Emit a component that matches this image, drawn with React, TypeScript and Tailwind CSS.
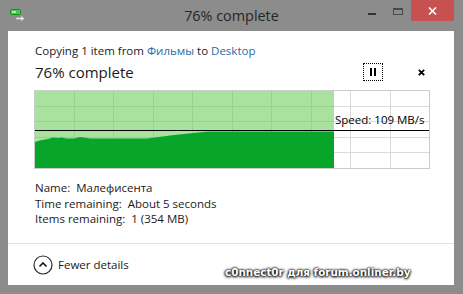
import React from "react";

const FONT = "font-['Open_Sans','Noto_Sans',sans-serif]";

// Throughput chart: progress area, grid, transfer-rate curve and current-speed line
function SpeedChart() {
  const W = 396;
  const H = 79;
  const done = 300;
  const cols = [1, 2, 3, 4, 5, 6, 7, 8, 9].map((k) => Math.round(k * 39.5) + 0.5);
  const rows = [1, 2, 3, 4].map((k) => Math.round(k * 15.6) + 0.5);
  const curve =
    "M1,52 L4,51 L8,50 L14,49 L19,47.5 L24,48 L28,47.5 L32,48.5 L40,48.5 L46,47 L50,47.5 L56,48.5 L113,48.5 L140,45 L174,41.5 L" +
    done +
    ",41.5 L" +
    done +
    ",78 L1,78 Z";
  return (
    <div className="relative w-[396px] h-[79px] -ml-px">
      <svg width={W} height={H} className="block" shapeRendering="crispEdges">
        <rect x="0" y="0" width={W} height={H} fill="#ffffff" />
        <rect x="1" y="1" width={done - 1} height={H - 2} fill="#a9e29f" />
        {cols.map((x) => (
          <line key={"v" + x} x1={x} y1={1} x2={x} y2={H - 1} stroke={x < done ? "#97d38c" : "#dadada"} strokeWidth={1} />
        ))}
        {rows.map((y) => (
          <g key={"h" + y}>
            <line x1={1} y1={y} x2={done} y2={y} stroke="#97d38c" strokeWidth={1} />
            <line x1={done} y1={y} x2={W - 1} y2={y} stroke="#dadada" strokeWidth={1} />
          </g>
        ))}
        <path d={curve} fill="#08a52b" shapeRendering="geometricPrecision" />
        <line x1={1} y1={40.5} x2={W - 1} y2={40.5} stroke="#000000" strokeWidth={1} />
        <rect x="0.5" y="0.5" width={W - 1} height={H - 1} fill="none" stroke="#c9cfc8" strokeWidth={1} />
      </svg>
      <div className={`absolute left-[301px] top-[22px] text-[11.5px] leading-[16px] text-black whitespace-nowrap ${FONT}`}>
        Speed: 109 MB/s
      </div>
    </div>
  );
}

function TitleIcon() {
  return (
    <svg width="18" height="14" viewBox="0 0 18 14">
      <rect x="1.5" y="1.5" width="10" height="5" rx="1" fill="#3ccf47" stroke="#1f8a2a" strokeWidth="1" />
      <rect x="3" y="3" width="4" height="2" fill="#9ef29f" />
      <path d="M7 9.5 H12 V7.5 L15.5 10.5 L12 13.5 V11.5 H7 Z" fill="#e8e8e8" stroke="#9a9a9a" strokeWidth="0.7" />
    </svg>
  );
}

export default function App() {
  return (
    <div className={`relative w-[463px] h-[294px] bg-[#8c8c8c] flex flex-col overflow-hidden ${FONT}`}>
      {/* caption bar */}
      <div className="h-[31px] grid grid-cols-[1fr_auto_1fr] shrink-0">
        <div className="flex items-start pl-[9px] pt-[8px]">
          <TitleIcon />
        </div>
        <div className="text-[14.4px] leading-[31px] text-[#262626]">76% complete</div>
        <div className="flex items-start justify-end pr-[9px]">
          <div className="w-[26px] h-[21px] flex justify-center pt-[13px]">
            <div className="w-[8px] h-[2px] bg-[#333333]" />
          </div>
          <div className="w-[26px] h-[21px] flex justify-center pt-[8px]">
            <div className="w-[10px] h-[7px] border border-[#4a4a4a] border-t-2" />
          </div>
          <div className="w-[43px] h-[21px] bg-[#c75050] flex items-center justify-center">
            <svg width="9" height="8" viewBox="0 0 9 8">
              <path d="M1 0.5 L8 7.5 M8 0.5 L1 7.5" stroke="#ffffff" strokeWidth="1.6" />
            </svg>
          </div>
        </div>
      </div>

      {/* dialog body */}
      <div className="flex-1 ml-[8px] mr-[9px] mb-[9px] bg-white flex flex-col">
        <div className="flex-1 pl-[27px] pr-[23px] pt-[12px]">
          <div className="text-[11.5px] leading-[16px] text-[#1a1a1a] whitespace-nowrap">
            Copying 1 item from <span className="text-[#2a6ba3]">Фильмы</span> to{" "}
            <span className="text-[#2a6ba3]">Desktop</span>
          </div>
          <div className="mt-[3px] h-[20px] flex items-center">
            <div className="text-[15px] leading-[20px] text-[#1a1a1a]">76% complete</div>
            <div className="ml-auto w-[20px] h-[18px] border border-dotted border-black flex items-center justify-center gap-[2px]">
              <div className="w-[2px] h-[8px] bg-black" />
              <div className="w-[2px] h-[8px] bg-black" />
            </div>
            <div className="ml-[28px] w-[20px] h-[18px] flex items-center justify-center">
              <svg width="7" height="7" viewBox="0 0 7 7">
                <path d="M0.8 0.8 L6.2 6.2 M6.2 0.8 L0.8 6.2" stroke="#000000" strokeWidth="1.8" />
              </svg>
            </div>
          </div>
          <div className="mt-[8px]">
            <SpeedChart />
          </div>
          <div className="mt-[11px] text-[11.5px] leading-[15.5px] text-[#1a1a1a] whitespace-nowrap">
            <div>Name:&nbsp; Малефисента</div>
            <div>Time remaining:&nbsp; About 5 seconds</div>
            <div>Items remaining:&nbsp; 1 (354 MB)</div>
          </div>
        </div>
        <div className="h-[42px] border-t border-[#e3e3e3] flex items-center pl-[25px] shrink-0">
          <svg width="20" height="20" viewBox="0 0 20 20">
            <circle cx="10" cy="10" r="9" fill="none" stroke="#2b2b2b" strokeWidth="1.2" />
            <path d="M6.5 11.5 L10 8 L13.5 11.5" fill="none" stroke="#1a1a1a" strokeWidth="1.7" />
          </svg>
          <span className="ml-[5px] text-[11.5px] leading-[16px] text-[#1a1a1a]">Fewer details</span>
        </div>
      </div>

      {/* forum watermark */}
      <div className="absolute left-[225px] top-[263px] text-[10.4px] leading-[18px] font-bold text-white whitespace-nowrap font-['DejaVu_Sans',sans-serif] [text-shadow:0_0_2px_#000,0_0_3px_#000,0_1px_3px_#000]">
        c0nnect0r для forum.onliner.by
      </div>
    </div>
  );
}
